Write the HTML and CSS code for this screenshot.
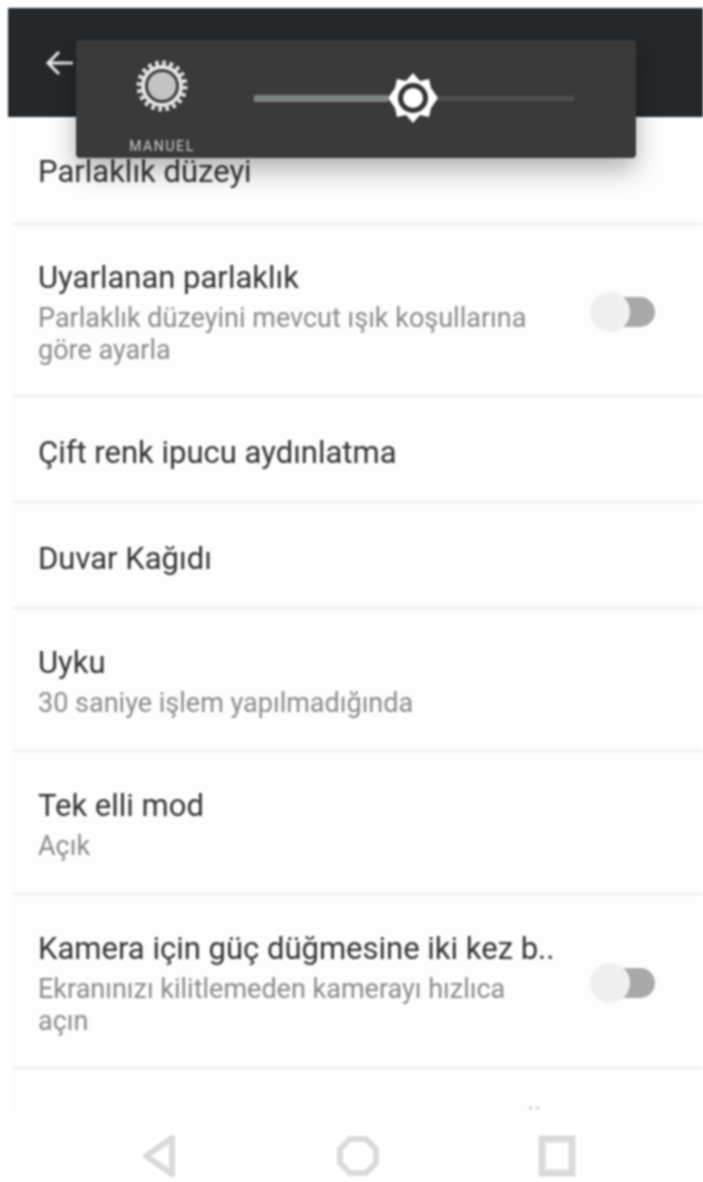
FILE: index.html
```html
<!DOCTYPE html>
<html lang="tr">

<head>
    <meta charset="UTF-8">
    <title>Ekran</title>
    <link rel="stylesheet" href="styles.css">
</head>

<body>
    <div class="screen">
        <header class="top-bar">
            <svg class="back-icon" viewBox="0 0 32 32" width="32" height="32">
                <path d="M29 16H5M15 5 4 16l11 11" fill="none" stroke="#e8e8e8" stroke-width="3"/>
            </svg>
        </header>

        <main class="settings">
            <div class="row row-first">
                <p class="title">Parlaklık düzeyi</p>
            </div>
            <div class="row row-adaptive">
                <div class="text">
                    <p class="title">Uyarlanan parlaklık</p>
                    <p class="sub">Parlaklık düzeyini mevcut ışık koşullarına göre ayarla</p>
                </div>
                <div class="switch"><span class="knob"></span></div>
            </div>
            <div class="row row-led">
                <p class="title">Çift renk ipucu aydınlatma</p>
            </div>
            <div class="row row-wall">
                <p class="title">Duvar Kağıdı</p>
            </div>
            <div class="row row-two">
                <div class="text">
                    <p class="title">Uyku</p>
                    <p class="sub">30 saniye işlem yapılmadığında</p>
                </div>
            </div>
            <div class="row row-two">
                <div class="text">
                    <p class="title">Tek elli mod</p>
                    <p class="sub">Açık</p>
                </div>
            </div>
            <div class="row row-camera">
                <div class="text">
                    <p class="title">Kamera için güç düğmesine iki kez b..</p>
                    <p class="sub">Ekranınızı kilitlemeden kamerayı hızlıca açın</p>
                </div>
                <div class="switch"><span class="knob"></span></div>
            </div>
            <div class="row-more">..</div>
        </main>

        <nav class="nav-bar">
            <svg viewBox="0 0 40 44" width="40" height="44">
                <path d="M33 4 7 22l26 18z" fill="none" stroke="#dadada" stroke-width="6" stroke-linejoin="round"/>
            </svg>
            <svg viewBox="0 0 44 44" width="44" height="44">
                <path d="M14 5h16l10 10v14L30 39H14L4 29V15z" fill="none" stroke="#dadada" stroke-width="6" stroke-linejoin="round"/>
            </svg>
            <svg viewBox="0 0 40 44" width="40" height="44">
                <rect x="5" y="5" width="30" height="34" fill="none" stroke="#dadada" stroke-width="7"/>
            </svg>
        </nav>
    </div>

    <!-- brightness popup sits over the top bar and first row -->
    <div class="brightness">
        <div class="auto">
            <svg viewBox="0 0 52 52" width="52" height="52">
                <circle cx="26" cy="26" r="23" fill="none" stroke="#e6e6e6" stroke-width="5" stroke-dasharray="3.6 3.6"/>
                <circle cx="26" cy="26" r="19" fill="none" stroke="#e6e6e6" stroke-width="4"/>
                <circle cx="26" cy="26" r="14" fill="#c4c4c4"/>
            </svg>
            <span class="auto-label">MANUEL</span>
        </div>
        <div class="slider">
            <div class="track-on"></div>
            <svg class="thumb" viewBox="0 0 50 50" width="50" height="50">
                <path d="M25 0l7 8 9-2 2 9 7 10-7 10-2 9-9-2-7 8-7-8-9 2-2-9-7-10 7-10 2-9 9 2z" fill="#fff"/>
                <circle cx="25" cy="25" r="15" fill="#333"/>
                <circle cx="25" cy="25" r="10" fill="#fff"/>
            </svg>
            <div class="track-off"></div>
        </div>
    </div>
</body>

</html>
```

FILE: styles.css
```css
html, body {
    margin: 0;
    padding: 0;
    width: 703px;
    height: 1182px;
    overflow: hidden;
    background-color: #fff;
    font-family: "Roboto", "Liberation Sans", sans-serif;
}

p {
    margin: 0;
}

.screen {
    display: flex;
    flex-direction: column;
    height: 1182px;
    padding-top: 8px;
    box-sizing: border-box;
    filter: blur(1.1px);
}

.top-bar {
    height: 109px;
    margin-left: 8px;
    background-color: #24282b;
    display: flex;
    align-items: center;
    flex-shrink: 0;
}

.back-icon {
    margin-left: 36px;
}

.settings {
    margin-left: 12px;
    flex-shrink: 0;
    background-color: #fdfdfd;
}

.row {
    display: flex;
    align-items: center;
    box-sizing: border-box;
    padding: 4px 0 0 26px;
    border-bottom: 2px solid #eeeeee;
}

.row-first {
    height: 108px;
    align-items: flex-start;
    padding-top: 40px;
}

.row-first .title {
    line-height: 30px;
}

.row-adaptive {
    height: 172px;
}

.row-led {
    height: 106px;
    padding-top: 8px;
}

.row-wall {
    height: 106px;
    padding-top: 8px;
}

.row-two {
    height: 143px;
}

.row-camera {
    height: 174px;
}

.row-more {
    height: 44px;
    padding-left: 516px;
    font-size: 20px;
    line-height: 66px;
    letter-spacing: 2px;
    color: #aaa;
}

.text {
    width: 520px;
}

.title {
    font-size: 31px;
    line-height: 38px;
    color: #333;
    white-space: nowrap;
}

.sub {
    margin-top: 5px;
    font-size: 27px;
    line-height: 32px;
    color: #8a8a8a;
}

.switch {
    width: 61px;
    height: 30px;
    margin-left: 36px;
    border-radius: 15px;
    background-color: #a9a9a9;
    display: flex;
    align-items: center;
}

.knob {
    width: 40px;
    height: 40px;
    margin-left: -4px;
    border-radius: 50%;
    background-color: #f0f0f0;
}

.nav-bar {
    flex: 1;
    display: flex;
    justify-content: space-between;
    align-items: center;
    padding: 16px 126px 0 139px;
    background-color: #fff;
}

.brightness {
    position: absolute;
    left: 76px;
    top: 40px;
    width: 560px;
    height: 118px;
    box-sizing: border-box;
    padding: 20px 62px 0 60px;
    display: flex;
    gap: 66px;
    background-color: #3a3a3a;
    border-radius: 4px;
    box-shadow: 0 12px 26px rgba(0, 0, 0, 0.3);
    filter: blur(0.8px);
}

.auto {
    display: flex;
    flex-direction: column;
    align-items: center;
    width: 52px;
    flex-shrink: 0;
}

.auto-label {
    margin-top: 27px;
    font-size: 14px;
    line-height: 14px;
    letter-spacing: 1.6px;
    color: #cfcfcf;
}

.slider {
    flex: 1;
    display: flex;
    align-items: center;
    height: 76px;
}

.track-on {
    width: 134px;
    height: 7px;
    background-color: #7d8581;
}

.thumb {
    flex-shrink: 0;
}

.track-off {
    flex: 1;
    height: 5px;
    background-color: #505050;
}
```
